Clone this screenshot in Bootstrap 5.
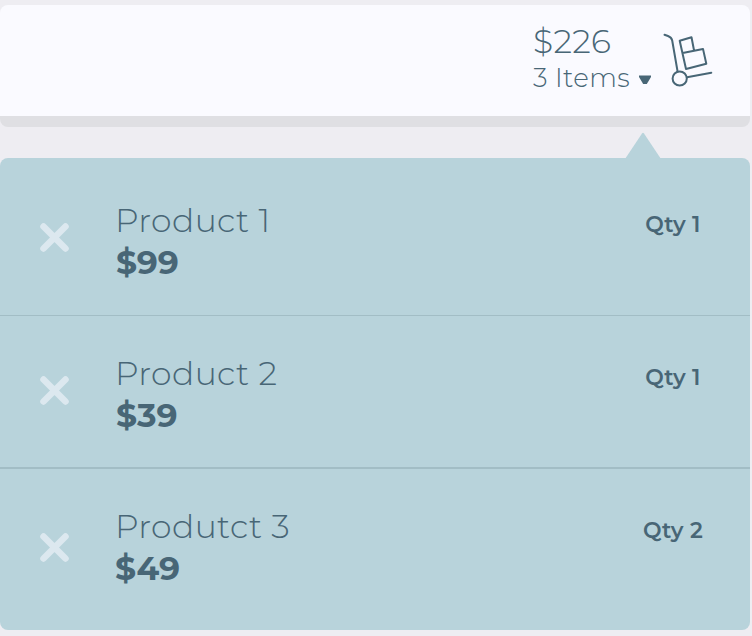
<!DOCTYPE html>
<html lang="en">
<head>
<meta charset="utf-8">
<meta name="viewport" content="width=device-width, initial-scale=1">
<title>Cart</title>
<link href="https://cdn.jsdelivr.net/npm/bootstrap@5.3.0/dist/css/bootstrap.min.css" rel="stylesheet">
<style>
body{background:#eeedf2;color:#486676;font-family:Montserrat,Inter,"Open Sans",sans-serif;width:752px;height:636px;overflow:hidden}
.cart-shell{width:750px;padding-top:5px}
.cart-bar{height:122px;background:#fafaff;border-bottom:11px solid #dfdfe3;border-radius:8px;padding:16px 36px 0 533px}
.cart-total{font-size:33px;font-weight:300;line-height:40px;letter-spacing:.3px}
.cart-count{font-size:26px;font-weight:300;line-height:32px;letter-spacing:.4px;white-space:nowrap;margin-top:1px}
.cart-caret{width:14px;height:10px;margin-left:8px;margin-top:3px}
.cart-truck{width:52px;height:58px;margin-top:11px}
.cart-pointer{display:block;width:36px;height:27px;margin:5px 0 -1px 625px}
.cart-panel{background:#b8d3db;border-radius:8px;height:472px}
.cart-item{height:153px;padding:36px 0 0 40px;border-bottom:2px solid #a2bdc5}
.cart-item:first-child{height:158px;padding-top:41px;border-bottom-width:1px}
.cart-item:last-child{border:0;height:161px}
.cart-remove{width:29px;height:29px;margin-top:24px;background:none;border:0;padding:0}
.cart-item:last-child .cart-remove{margin-top:28px}
.cart-remove svg,.cart-truck,.cart-caret{display:block}
.cart-info{margin-left:46px;width:500px}
.cart-name{font-size:33px;font-weight:300;line-height:42px;letter-spacing:.4px}
.cart-price{font-size:33px;font-weight:700;line-height:42px;margin-left:1px}
.cart-item:last-child .cart-price{margin-left:0}
.cart-qty{font-size:22px;font-weight:600;line-height:30px;padding-top:11px;width:116px;text-align:center;letter-spacing:.2px}
</style>
</head>
<body>
<main class="cart-shell">
  <header class="cart-bar d-flex justify-content-between">
    <div>
      <div class="cart-total">$226</div>
      <div class="d-flex align-items-center cart-count"><span>3 Items</span>
        <svg class="cart-caret" viewBox="0 0 14 10"><path d="M1 .5h12v1.500L8.800 9H5.200L1 2z" fill="#486676"/></svg></div>
    </div>
    <svg class="cart-truck" viewBox="662 32 52 58" fill="none" stroke="#486676" stroke-width="2" stroke-linejoin="round" stroke-linecap="round">
      <path d="M664.500 34.800l3.500 1.200q3.500 1.300 4.200 4.500L677.500 71M687 77.300l24.300-4.500M686 69L679.700 40.800l11.800-3.500 2.500 13M682.700 52.900l20.300-4 3.300 14.900L686 69"/>
      <circle cx="679.700" cy="78.500" r="7.100"/>
    </svg>
  </header>
  <svg class="cart-pointer" viewBox="0 0 36 27"><path d="M0 27L17 1.500q1-1.300 2 0L36 27z" fill="#b8d3db"/></svg>
  <section class="cart-panel">
    <div class="cart-item d-flex align-items-start">
      <button class="cart-remove" aria-label="Remove"><svg viewBox="0 0 29 29" width="29" height="29"><path d="M3.500 3.500l22 22M25.500 3.500l-22 22" stroke="#dce8ef" stroke-width="6.500" stroke-linecap="round"/></svg></button>
      <div class="cart-info"><div class="cart-name">Product 1</div><div class="cart-price">$99</div></div>
      <div class="cart-qty">Qty 1</div>
    </div>
    <div class="cart-item d-flex align-items-start">
      <button class="cart-remove" aria-label="Remove"><svg viewBox="0 0 29 29" width="29" height="29"><path d="M3.500 3.500l22 22M25.500 3.500l-22 22" stroke="#dce8ef" stroke-width="6.500" stroke-linecap="round"/></svg></button>
      <div class="cart-info"><div class="cart-name">Product 2</div><div class="cart-price">$39</div></div>
      <div class="cart-qty">Qty 1</div>
    </div>
    <div class="cart-item d-flex align-items-start">
      <button class="cart-remove" aria-label="Remove"><svg viewBox="0 0 29 29" width="29" height="29"><path d="M3.500 3.500l22 22M25.500 3.500l-22 22" stroke="#dce8ef" stroke-width="6.500" stroke-linecap="round"/></svg></button>
      <div class="cart-info"><div class="cart-name">Produtct 3</div><div class="cart-price">$49</div></div>
      <div class="cart-qty">Qty 2</div>
    </div>
  </section>
</main>
<script src="https://cdn.jsdelivr.net/npm/bootstrap@5.3.0/dist/js/bootstrap.bundle.min.js"></script>
</body>
</html>
